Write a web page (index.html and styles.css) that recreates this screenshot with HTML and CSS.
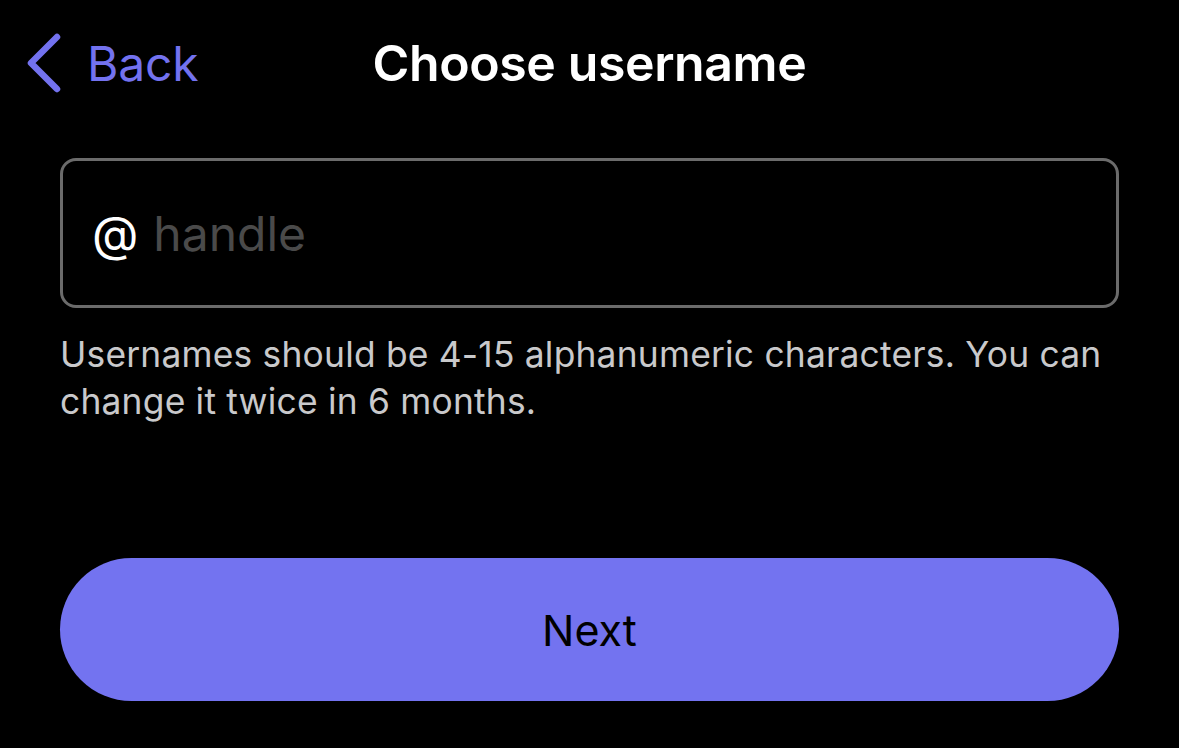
FILE: index.html
```html
<!DOCTYPE html>
<html lang="en">
<head>
<meta charset="utf-8">
<title>Choose username</title>
<link rel="stylesheet" href="styles.css">
</head>
<body>
<div class="screen">
  <header class="nav">
    <div class="back">
      <svg class="chevron" width="40" height="60" viewBox="0 0 40 60">
        <path d="M31 4 L5 30 L31 56" fill="none" stroke="currentColor" stroke-width="6.5" stroke-linecap="round" stroke-linejoin="round"/>
      </svg>
      <span class="back-label">Back</span>
    </div>
    <h1 class="title">Choose username</h1>
    <div class="spacer"></div>
  </header>
  <main class="content">
    <div class="field">
      <span class="at">@</span>
      <span class="placeholder">handle</span>
    </div>
    <p class="hint">Usernames should be 4-15 alphanumeric characters. You can change it twice in 6 months.</p>
    <button class="next">Next</button>
  </main>
</div>
</body>
</html>
```
FILE: styles.css
```css
html, body {
  margin: 0;
  padding: 0;
  background: #000;
}
body {
  font-family: Inter, "Noto Sans", "Liberation Sans", sans-serif;
  color: #fff;
  width: 1179px;
  height: 748px;
  overflow: hidden;
}
.screen {
  display: flex;
  flex-direction: column;
}
.nav {
  height: 126px;
  display: grid;
  grid-template-columns: 1fr auto 1fr;
  align-items: center;
}
.back {
  display: flex;
  align-items: center;
  color: #7372ef;
  padding-left: 26px;
}
.chevron {
  display: block;
  margin-right: 21px;
}
.back-label {
  font-size: 48px;
  font-weight: 400;
  letter-spacing: -0.2px;
}
.title {
  margin: 0;
  font-size: 50px;
  font-weight: 600;
  letter-spacing: -0.4px;
}
.content {
  padding: 32px 60px 0;
  display: flex;
  flex-direction: column;
}
.field {
  height: 150px;
  box-sizing: border-box;
  border: 3px solid #6b6b6b;
  border-radius: 16px;
  display: flex;
  align-items: center;
  padding-left: 29px;
  font-size: 48px;
}
.at {
  color: #fff;
  margin-right: 15px;
}
.placeholder {
  color: #4a4a4a;
}
.hint {
  margin: 23px 0 0;
  font-size: 35.4px;
  line-height: 47px;
  color: #c9c9cb;
  letter-spacing: 0.2px;
}
.next {
  margin-top: 133px;
  height: 143px;
  border: none;
  border-radius: 72px;
  background: #7373f0;
  color: #000;
  font-family: inherit;
  font-size: 43px;
  font-weight: 400;
  padding: 0;
}
```
